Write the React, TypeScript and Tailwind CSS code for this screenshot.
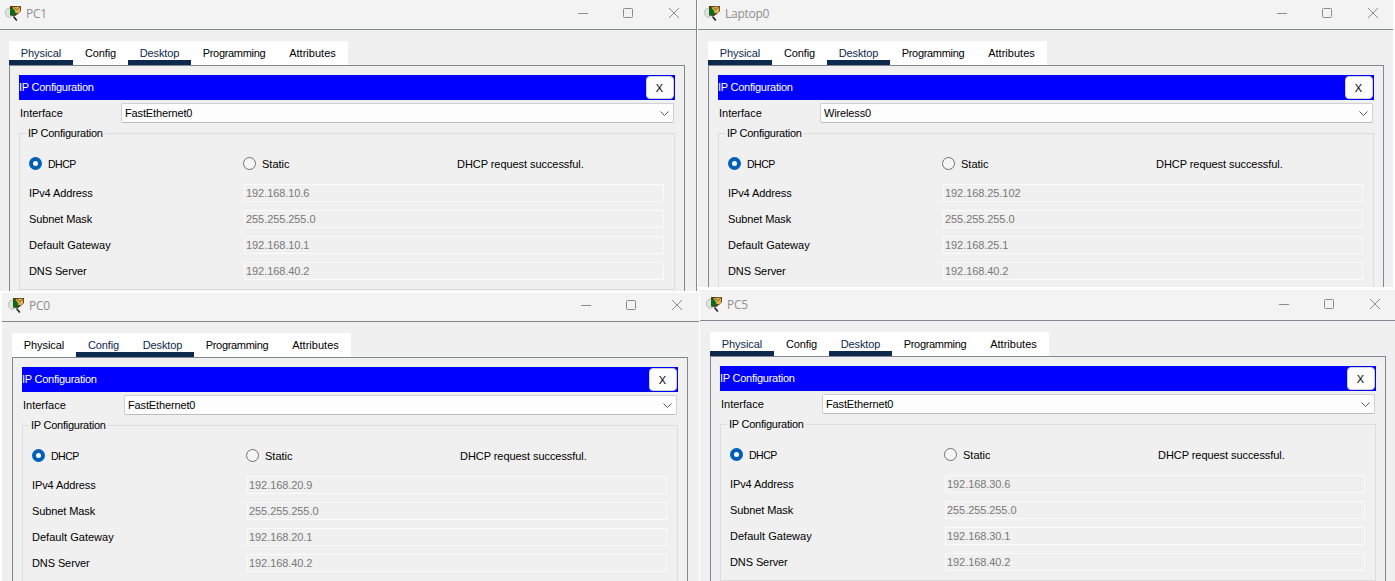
import React from "react";

type Tab = { name: string; width: string; tracking: string };

const tabs: Tab[] = [
  { name: "Physical", width: "w-[64px]", tracking: "tracking-[-0.06px]" },
  { name: "Config", width: "w-[55px]", tracking: "tracking-[-0.1px]" },
  { name: "Desktop", width: "w-[63px]", tracking: "tracking-[-0.1px]" },
  { name: "Programming", width: "w-[86px]", tracking: "tracking-[-0.32px]" },
  { name: "Attributes", width: "w-[71px]", tracking: "tracking-[0.02px]" },
];

function AppIcon() {
  return (
    <svg width="18" height="18" viewBox="0 0 18 18" className="shrink-0">
      <ellipse cx="5.5" cy="8.7" rx="4.2" ry="4.6" fill="#dfe2de" stroke="#bcc0bb" strokeWidth="1" />
      <path d="M6 2 H17 V7 L14.5 9.5 L11 12 L6 11.5 Z" fill="#4b3a16" />
      <path d="M8.5 3 L16.2 2.6 V7.4 L14 9.5 L10 8.5 Z" fill="#e0b050" />
      <path d="M9.5 3 L12.8 5.6 L16.2 2.8" stroke="#7a5518" strokeWidth="0.9" fill="none" />
      <path d="M6.2 4.5 L8.5 4 L11.2 7 L11 10.8 L8 11.5 L6 10 Z" fill="#0b6e1b" />
      <path d="M9.5 12.5 L12.8 16.5" stroke="#1a1a1a" strokeWidth="1.5" />
    </svg>
  );
}

function TitleBar({ title, inset }: { title: string; inset: string }) {
  return (
    <div className={`flex h-[30px] shrink-0 items-start border-b border-[#83878f] bg-[#f3f3f3] ${inset}`}>
      <div className="flex w-[556px] shrink-0 pt-1 pl-1">
        <AppIcon />
        <span className="pl-1 font-['Open_Sans',sans-serif] text-[12px] leading-[19px] tracking-[-0.25px] text-[#8f8f8f]">
          {title}
        </span>
      </div>
      <svg width="124" height="26" viewBox="0 0 124 26" fill="none" stroke="#8c8c8c" className="shrink-0">
        <path d="M22 13.5H32" />
        <rect x="67.5" y="8.5" width="9" height="9" rx="1" />
        <path d="M113 8L123 18M123 8L113 18" />
      </svg>
    </div>
  );
}

function Radio({ checked }: { checked?: boolean }) {
  return checked ? (
    <span className="flex size-[13px] items-center justify-center rounded-full bg-[#005fb8]">
      <span className="size-[5px] rounded-full bg-white" />
    </span>
  ) : (
    <span className="size-[13px] rounded-full border border-[#707070] bg-[#f5f5f5]" />
  );
}

type PanelProps = {
  title: string;
  active: string[];
  iface: string;
  ip: string;
  gateway: string;
  frame: string;
  content: string;
  inset: string;
};

function Panel({ title, active, iface, ip, gateway, frame, content, inset }: PanelProps) {
  const rows = [
    { label: "IPv4 Address", value: ip, tracking: "tracking-[-0.1px]" },
    { label: "Subnet Mask", value: "255.255.255.0", tracking: "tracking-[-0.1px]" },
    { label: "Default Gateway", value: gateway, tracking: "tracking-[0.03px]" },
    { label: "DNS Server", value: "192.168.40.2", tracking: "tracking-[-0.1px]" },
  ];
  return (
    <section className={`shrink-0 overflow-hidden bg-[#f0f0f0] ${frame}`}>
      <div className={content}>
        <TitleBar title={title} inset={inset} />
        <div className="pt-[11px] pl-[9px]">
          <div className="flex h-6 w-[339px] bg-white">
            {tabs.map((t) => (
              <div
                key={t.name}
                className={`flex h-6 justify-center border-b-[5px] pt-[4px] leading-[17px] ${t.width} ${t.tracking} ${
                  active.includes(t.name) ? "border-[#0d294d] text-[#0d294d]" : "border-white"
                }`}
              >
                {t.name}
              </div>
            ))}
          </div>
          <div className="h-[300px] w-[676px] border border-[#83878f] px-[9px] pt-[9px]">
            <div className="flex h-[25px] items-center justify-between bg-[#0000ff] pr-px text-white">
              <span className="tracking-[-0.25px]">IP Configuration</span>
              <span className="flex h-[23px] w-7 items-center justify-center rounded-[4px] border border-[#d0d0d0] bg-[#fdfdfd] pt-[2px] pr-px text-black">
                X
              </span>
            </div>
            <div className="mt-[3px] flex h-5 items-center pr-px">
              <span className="w-[102px] pl-px">Interface</span>
              <div className="flex h-5 flex-1 items-center justify-between rounded-[2px] border border-[#d0d0d0] border-b-[#bcbcbc] bg-[#fdfdfd] pr-1 pl-[3px]">
                <span className="tracking-[-0.14px]">{iface}</span>
                <svg width="9" height="7" viewBox="0 0 9 7" fill="none" stroke="#5c5c5c" className="mt-px">
                  <path d="M0.5 1.5L4.5 5.5L8.5 1.5" />
                </svg>
              </div>
            </div>
            <fieldset className="mt-[3px] h-[164px] border border-[#dcdcdc] pl-[9px]">
              <legend className="-ml-[3px] h-[15px] px-[2px] leading-[15px] tracking-[-0.25px]">IP Configuration</legend>
              <div className="mt-4 flex h-[13px] items-center">
                <div className="flex w-[214px] items-center gap-[6px]">
                  <Radio checked />
                  <span className="pt-[2px] tracking-[-0.8px]">
                    <span className="text-[10.5px] tracking-[-0.5px]">DHCP</span>
                  </span>
                </div>
                <div className="flex w-[214px] items-center gap-[6px]">
                  <Radio />
                  <span className="pt-[2px]">Static</span>
                </div>
                <span className="pt-[2px] tracking-[-0.06px]">DHCP request successful.</span>
              </div>
              <div className="mt-[14px] flex flex-col gap-2">
                {rows.map((r) => (
                  <div key={r.label} className="flex h-[18px] items-center">
                    <span className={`w-[215px] ${r.tracking}`}>{r.label}</span>
                    <span className="flex h-[18px] w-[420px] items-center border border-[#fafafa] pl-px tracking-[-0.07px] text-[#787878]">
                      {r.value}
                    </span>
                  </div>
                ))}
              </div>
            </fieldset>
          </div>
        </div>
      </div>
    </section>
  );
}

export default function App() {
  return (
    <main className="flex h-[581px] w-[1395px] overflow-hidden bg-white font-['Liberation_Sans',Arial,sans-serif] text-[11px] leading-[13px] whitespace-nowrap text-black">
      <div className="flex w-[698px] shrink-0 flex-col gap-[2px]">
        <Panel title="PC1" active={["Physical", "Desktop"]} iface="FastEthernet0" ip="192.168.10.6" gateway="192.168.10.1" frame="h-[291px] w-[697px] border-r border-[#83878f]" content="" inset="" />
        <Panel title="PC0" active={["Config", "Desktop"]} iface="FastEthernet0" ip="192.168.20.9" gateway="192.168.20.1" frame="ml-[2px] h-[288px] w-[697px]" content="-mt-px pl-px" inset="-ml-px pl-px" />
      </div>
      <div className="flex w-[697px] shrink-0 flex-col gap-[3px]">
        <Panel title="Laptop0" active={["Physical", "Desktop"]} iface="Wireless0" ip="192.168.25.102" gateway="192.168.25.1" frame="h-[287px] w-[695px]" content="pl-px" inset="-ml-px pl-px" />
        <Panel title="PC5" active={["Physical", "Desktop"]} iface="FastEthernet0" ip="192.168.30.6" gateway="192.168.30.1" frame="ml-[2px] h-[291px] w-[695px]" content="pt-px pl-px" inset="-ml-px pl-px" />
      </div>
    </main>
  );
}
